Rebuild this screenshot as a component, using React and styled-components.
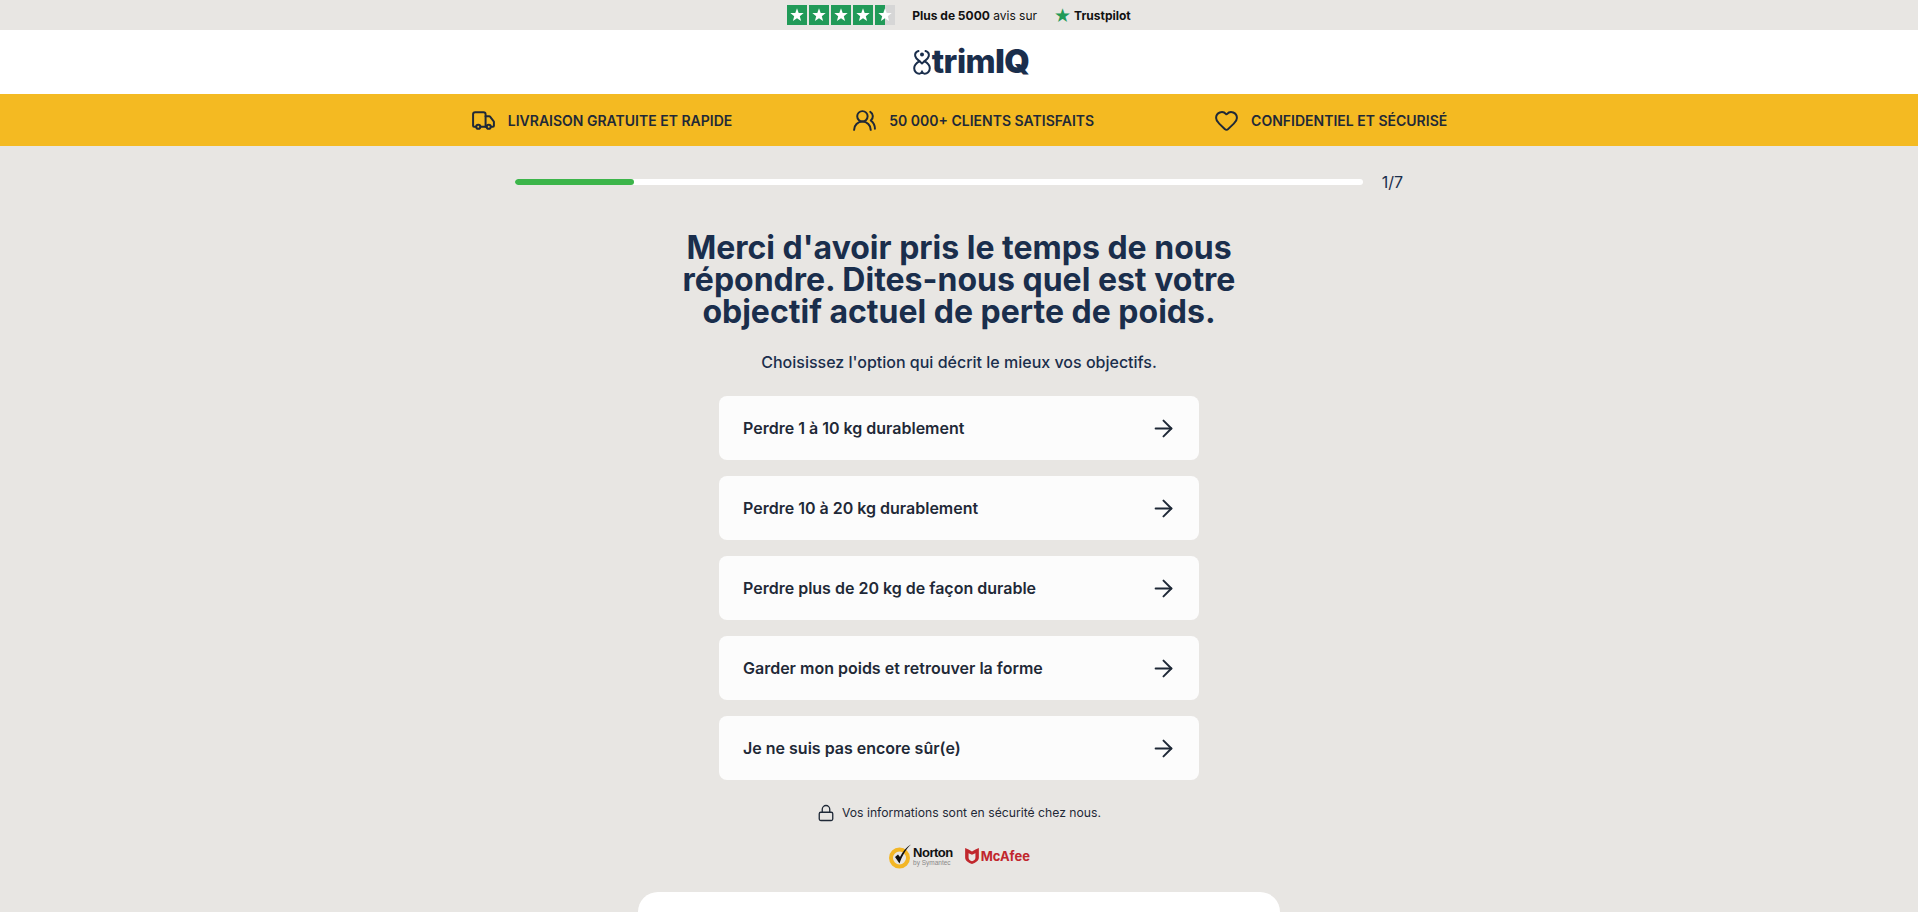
import React from "react";
import styled, { createGlobalStyle } from "styled-components";
import { ArrowRight, Heart, Lock, Truck, UsersRound } from "lucide-react";

const GlobalStyle = createGlobalStyle`
  html, body {
    margin: 0;
    padding: 0;
    height: 100%;
    overflow: hidden;
    background: #e8e6e3;
  }
  body {
    font-family: Inter, "Liberation Sans", sans-serif;
    color: #1a2e4c;
  }
`;

const options = [
  "Perdre 1 à 10 kg durablement",
  "Perdre 10 à 20 kg durablement",
  "Perdre plus de 20 kg de façon durable",
  "Garder mon poids et retrouver la forme",
  "Je ne suis pas encore sûr(e)",
];

const perks = [
  { icon: Truck, label: "Livraison gratuite et rapide" },
  { icon: UsersRound, label: "50 000+ clients satisfaits" },
  { icon: Heart, label: "Confidentiel et sécurisé" },
];

const StarPath = () => (
  <path d="M10 3.2l1.7 4.7 5 .2-3.9 3.1 1.3 4.8L10 13.2 5.900 16l1.300-4.800L3.300 8.100l5-.2z" fill="#fff" />
);

const TrustStars = () => (
  <svg width="108" height="20" viewBox="0 0 108 20">
    <defs>
      <linearGradient id="half">
        <stop offset="50%" stopColor="#219a58" />
        <stop offset="50%" stopColor="#d6d6d6" />
      </linearGradient>
    </defs>
    {[0, 22, 44, 66, 88].map((x, i) => (
      <g key={x} transform={`translate(${x} 0)`}>
        <rect width="20" height="20" fill={i === 4 ? "url(#half)" : "#219a58"} />
        <StarPath />
      </g>
    ))}
  </svg>
);

const LogoMark = () => (
  <svg width="18" height="26" viewBox="0 0 18 26" fill="none" stroke="#1a2e4c" strokeWidth="2" strokeLinecap="round">
    <path d="M5.500 2C3 2.800 1.800 4.800 2.200 7c.4 2.300 2.400 3.700 4.300 5.200C3.500 14 1.200 16 1.200 19.200c0 3.400 2.600 5.600 5.200 5.600 1.300 0 2-1 2.600-2 .6 1 1.300 2 2.600 2 2.600 0 5.200-2.200 5.200-5.600 0-3.200-2.300-5.200-5.300-7 1.900-1.500 3.900-2.900 4.300-5.200.4-2.200-.8-4.200-3.300-5" />
    <circle cx="9" cy="5.500" r="2" fill="#1a2e4c" stroke="none" />
    <path d="M6.500 12.200 9 14.500l2.500-2.300" />
  </svg>
);

const NortonBadge = () => (
  <svg width="26" height="26" viewBox="0 0 26 26" fill="none">
    <circle cx="11.500" cy="15" r="8.500" stroke="#f3b625" strokeWidth="4" />
    <path d="M7 14l4.500 6.500C14 13 18 6 23 1.500c-4.500 2.500-8.500 7.500-11 12.500l-2-2.500z" fill="#111" />
  </svg>
);

const McAfeeShield = () => (
  <svg width="14" height="16" viewBox="0 0 12 14">
    <path d="M0 0l3 1.400L6 3l3-1.600L12 0v8.500C12 11 9 13 6 14 3 13 0 11 0 8.500z" fill="#c1272d" />
    <path d="M3 4.500 6 6l3-1.500v4C9 10 7.500 11 6 11.500 4.500 11 3 10 3 8.500z" fill="#e8e6e3" />
  </svg>
);

const App = () => {
  return (
    <Page>
      <GlobalStyle />
      <TrustBar>
        <TrustStars />
        <TrustText>
          <strong>Plus de 5000</strong> avis sur
        </TrustText>
        <TrustBrand>
          <BrandStar>★</BrandStar>
          Trustpilot
        </TrustBrand>
      </TrustBar>

      <Header>
        <LogoMark />
        <LogoText>
          trim<LogoHeavy>IQ</LogoHeavy>
        </LogoText>
      </Header>

      <PerkBar>
        {perks.map(({ icon: Icon, label }) => (
          <Perk key={label}>
            <Icon size={25} strokeWidth={1.9} />
            {label}
          </Perk>
        ))}
      </PerkBar>

      <Main>
        <ProgressRow>
          <ProgressTrack>
            <ProgressFill style={{ width: "14%" }} />
          </ProgressTrack>
          <ProgressLabel>1/7</ProgressLabel>
        </ProgressRow>

        <Title>
          Merci d'avoir pris le temps de nous répondre. Dites-nous quel est
          votre objectif actuel de perte de poids.
        </Title>
        <Subtitle>Choisissez l'option qui décrit le mieux vos objectifs.</Subtitle>

        <OptionList>
          {options.map((option) => (
            <Option key={option}>
              {option}
              <ArrowRight size={27} strokeWidth={1.75} />
            </Option>
          ))}
        </OptionList>

        <SafeNote>
          <Lock size={18} strokeWidth={1.75} />
          Vos informations sont en sécurité chez nous.
        </SafeNote>

        <Badges>
          <Norton>
            <NortonBadge />
            <NortonText>
              <NortonName>Norton</NortonName>
              <NortonSub>by Symantec</NortonSub>
            </NortonText>
          </Norton>
          <McAfee>
            <McAfeeShield />
            McAfee
          </McAfee>
        </Badges>

        <BottomCard />
      </Main>
    </Page>
  );
};

const Page = styled.div`
  display: flex;
  flex-direction: column;
`;

const TrustBar = styled.div`
  height: 30px;
  display: flex;
  align-items: center;
  justify-content: center;
  gap: 17px;
  font-size: 12px;
  color: #111;
`;

const TrustText = styled.span`
  font-weight: 400;
  strong {
    font-weight: 700;
  }
`;

const TrustBrand = styled.span`
  display: flex;
  align-items: center;
  gap: 3px;
  font-weight: 700;
`;

const BrandStar = styled.span`
  color: #219a58;
  font-family: "DejaVu Sans", sans-serif;
  font-size: 19px;
  line-height: 1;
`;

const Header = styled.header`
  height: 64px;
  padding-left: 24px;
  box-sizing: border-box;
  background: #fff;
  display: flex;
  align-items: center;
  justify-content: center;
  gap: 1px;
`;

const LogoText = styled.span`
  font-size: 32.5px;
  font-weight: 800;
  letter-spacing: -0.5px;
  color: #1a2e4c;
  line-height: 1;
`;

const LogoHeavy = styled.span`
  font-weight: 900;
`;

const PerkBar = styled.div`
  height: 52px;
  background: #f4ba22;
  display: flex;
  align-items: center;
  justify-content: center;
  gap: 120px;
`;

const Perk = styled.div`
  display: flex;
  align-items: center;
  gap: 12px;
  font-size: 14px;
  font-weight: 600;
  text-transform: uppercase;
  color: #1f2937;
`;

const Main = styled.main`
  display: flex;
  flex-direction: column;
  align-items: center;
  padding-top: 24px;
`;

const ProgressRow = styled.div`
  width: 888px;
  display: flex;
  align-items: center;
  gap: 19px;
`;

const ProgressTrack = styled.div`
  flex: 1;
  height: 6px;
  background: #fff;
  border-radius: 3px;
  overflow: hidden;
`;

const ProgressFill = styled.div`
  height: 100%;
  background: #3cb54a;
  border-radius: 3px;
`;

const ProgressLabel = styled.span`
  font-size: 16px;
  line-height: 24px;
`;

const Title = styled.h1`
  width: 600px;
  margin: 38px 0 0;
  font-size: 32px;
  font-weight: 700;
  line-height: 32px;
  text-align: center;
`;

const Subtitle = styled.p`
  margin: 22px 0 0;
  font-size: 16px;
  font-weight: 500;
  line-height: 24px;
`;

const OptionList = styled.div`
  width: 480px;
  margin-top: 22px;
  display: flex;
  flex-direction: column;
  gap: 16px;
`;

const Option = styled.div`
  height: 64px;
  padding: 0 22px 0 24px;
  box-sizing: border-box;
  display: flex;
  align-items: center;
  justify-content: space-between;
  background: #fcfcfc;
  border-radius: 8px;
  font-size: 16px;
  font-weight: 600;
  color: #1f2937;
`;

const SafeNote = styled.div`
  margin-top: 24px;
  display: flex;
  align-items: center;
  gap: 7px;
  font-size: 12.2px;
  line-height: 18px;
  color: #1f2937;
`;

const Badges = styled.div`
  margin-top: 21px;
  height: 26px;
  display: flex;
  align-items: center;
  gap: 12px;
`;

const Norton = styled.div`
  display: flex;
  align-items: center;
`;

const NortonText = styled.div`
  display: flex;
  flex-direction: column;
  margin-left: -1px;
`;

const NortonName = styled.span`
  font-family: "Liberation Sans", sans-serif;
  font-size: 13px;
  font-weight: 700;
  letter-spacing: -0.5px;
  line-height: 13px;
  color: #111;
`;

const NortonSub = styled.span`
  font-family: "Liberation Sans", sans-serif;
  font-size: 6.5px;
  line-height: 7px;
  color: #888;
`;

const McAfee = styled.div`
  display: flex;
  align-items: center;
  gap: 2px;
  font-size: 13px;
  font-weight: 700;
  color: #c1272d;
`;

const BottomCard = styled.section`
  width: 642px;
  height: 220px;
  margin-top: 23px;
  background: #fff;
  border-radius: 20px;
`;

export default App;
